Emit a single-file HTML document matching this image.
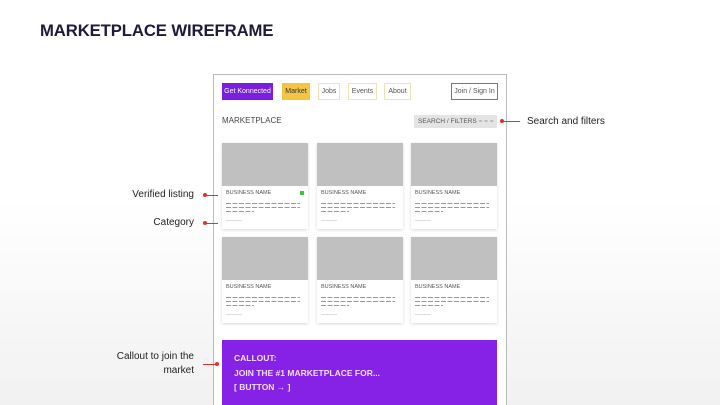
<!DOCTYPE html>
<html style="overflow:hidden;width:720px;height:405px"><head><style>
*{margin:0;padding:0;box-sizing:border-box}
body{width:720px;height:405px;overflow:hidden;position:relative;font-family:"Liberation Sans",sans-serif;background:linear-gradient(#fff 0,#fff 200px,#f1f1f1 405px)}
.a{position:absolute}
h1{position:absolute;left:40px;top:21px;font-size:16.7px;font-weight:900;color:#1d1a3a;letter-spacing:-0.1px}
.frame{left:213px;top:74px;width:294px;height:340px;border:1.5px solid #bbb;background:#fff}
.btn{position:absolute;top:83px;height:17px;font-size:7px;line-height:15px;text-align:center;color:#555;border:1px solid #eee3b5}
.card{position:absolute;width:86px;height:86px;background:#fff;box-shadow:0 1px 3px rgba(0,0,0,.15)}
.card .img{height:43px;background:#c0c0c0}
.card .n{position:absolute;left:4px;top:47px;font-size:5.5px;color:#555}
.card .l{position:absolute;left:4px;width:74px;height:1.2px;background:repeating-linear-gradient(90deg,#999 0 5px,transparent 5px 6.5px)}
.card .c{position:absolute;left:4px;top:77px;width:16px;height:1px;background:#ddd}
.lab{position:absolute;font-size:10px;color:#222}
.dot{position:absolute;width:4px;height:4px;border-radius:2px;background:#e03030}
.ln{position:absolute;height:1px;background:#e03030}
</style></head><body>
<h1>MARKETPLACE WIREFRAME</h1>
<div class="a frame"></div>
<div class="btn" style="left:222px;width:51px;background:#7a1fe0;color:#fff;border-color:#7a1fe0">Get Konnected</div>
<div class="btn" style="left:282px;width:28px;background:#f5c542;color:#333;border-color:#f5c542">Market</div>
<div class="btn" style="left:318px;width:22px">Jobs</div>
<div class="btn" style="left:348px;width:29px">Events</div>
<div class="btn" style="left:384px;width:27px">About</div>
<div class="btn" style="left:451px;width:47px;border-color:#8a5ae0">Join / Sign In</div>
<div class="a" style="left:222px;top:116px;font-size:8px;color:#444">MARKETPLACE</div>
<div class="a" style="left:414px;top:115px;width:83px;height:13px;background:#e4e4e4;font-size:6.5px;line-height:13px;padding-left:4px;color:#555">SEARCH / FILTERS <span style="color:#999">= = =</span></div>

<div class="card" style="left:222px;top:143px"><div class="img"></div><div class="n">BUSINESS NAME</div><div style="position:absolute;right:4px;top:48px;width:4px;height:4px;background:#3c3"></div><div class="l" style="top:60px"></div><div class="l" style="top:64px"></div><div class="l" style="top:68px;width:28px"></div><div class="c"></div></div>
<div class="card" style="left:317px;top:143px"><div class="img"></div><div class="n">BUSINESS NAME</div><div class="l" style="top:60px"></div><div class="l" style="top:64px"></div><div class="l" style="top:68px;width:28px"></div><div class="c"></div></div>
<div class="card" style="left:411px;top:143px"><div class="img"></div><div class="n">BUSINESS NAME</div><div class="l" style="top:60px"></div><div class="l" style="top:64px"></div><div class="l" style="top:68px;width:28px"></div><div class="c"></div></div>
<div class="card" style="left:222px;top:237px"><div class="img"></div><div class="n">BUSINESS NAME</div><div class="l" style="top:60px"></div><div class="l" style="top:64px"></div><div class="l" style="top:68px;width:28px"></div><div class="c"></div></div>
<div class="card" style="left:317px;top:237px"><div class="img"></div><div class="n">BUSINESS NAME</div><div class="l" style="top:60px"></div><div class="l" style="top:64px"></div><div class="l" style="top:68px;width:28px"></div><div class="c"></div></div>
<div class="card" style="left:411px;top:237px"><div class="img"></div><div class="n">BUSINESS NAME</div><div class="l" style="top:60px"></div><div class="l" style="top:64px"></div><div class="l" style="top:68px;width:28px"></div><div class="c"></div></div>

<div class="a" style="left:222px;top:340px;width:275px;height:70px;background:#8522e6;color:#f0e0ff;font-size:8.5px;font-weight:bold;line-height:14.5px;padding:11px 0 0 12px">CALLOUT:<br>JOIN THE #1 MARKETPLACE FOR...<br>[ BUTTON → ]</div>

<div class="lab" style="right:526px;top:189px">Verified listing</div>
<div class="dot" style="left:203px;top:193px"></div><div class="ln" style="left:205px;top:195px;width:13px"></div>
<div class="lab" style="right:526px;top:217px">Category</div>
<div class="dot" style="left:203px;top:221px"></div><div class="ln" style="left:205px;top:223px;width:13px"></div>
<div class="lab" style="left:527px;top:116px">Search and filters</div>
<div class="dot" style="left:500px;top:119px"></div><div class="ln" style="left:502px;top:121px;width:18px"></div>
<div class="lab" style="right:526px;top:350px;text-align:right;line-height:14px">Callout to join the<br>market</div>
<div class="dot" style="left:215px;top:362px"></div><div class="ln" style="left:203px;top:364px;width:13px"></div>
</body></html>
